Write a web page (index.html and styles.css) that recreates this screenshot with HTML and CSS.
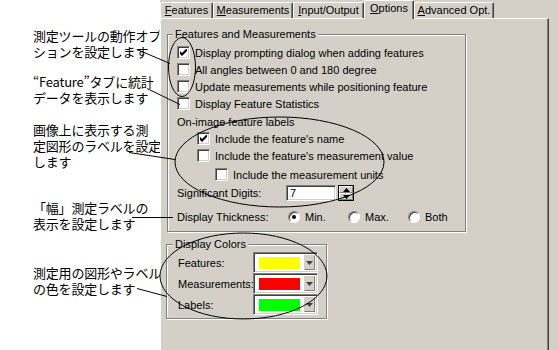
FILE: index.html
```html
<!DOCTYPE html>
<html lang="ja">
<head>
<meta charset="utf-8">
<title>Options</title>
<link rel="stylesheet" href="styles.css">
</head>
<body>
<div class="page">
  <div class="notes">
    <p class="note n1">測定ツールの動作オプ<br>ションを設定します</p>
    <p class="note n2">“Feature”タブに統計<br>データを表示します</p>
    <p class="note n3">画像上に表示する測<br>定図形のラベルを設定<br>します</p>
    <p class="note n4">「幅」測定ラベルの<br>表示を設定します</p>
    <p class="note n5">測定用の図形やラベル<br>の色を設定します</p>
  </div>
  <div class="dialog">
    <div class="tabctl">
      <div class="tabs">
        <span class="tab w-feat"><u>F</u>eatures</span>
        <span class="tab w-meas"><u>M</u>easurements</span>
        <span class="tab w-io"><u>I</u>nput/Output</span>
        <span class="tab w-opt sel"><u>O</u>ptions</span>
        <span class="tab w-adv"><u>A</u>dvanced Opt.</span>
      </div>
      <div class="tabbody">
        <fieldset class="grp g1">
          <legend>Features and Measurements</legend>
          <div class="row"><span class="cb on"><svg viewBox="0 0 7 7" width="7" height="7"><path d="M0 2v3l2 2 5-5V-1L2 4z" fill="#000"/></svg></span>Display prompting dialog when adding features</div>
          <div class="row"><span class="cb"></span>All angles between 0 and 180 degree</div>
          <div class="row"><span class="cb"></span>Update measurements while positioning feature</div>
          <div class="row"><span class="cb"></span>Display Feature Statistics</div>
          <div class="row sub">On-image feature labels</div>
          <div class="row ind1 r-name"><span class="cb on"><svg viewBox="0 0 7 7" width="7" height="7"><path d="M0 2v3l2 2 5-5V-1L2 4z" fill="#000"/></svg></span>Include the feature's name</div>
          <div class="row ind1"><span class="cb"></span>Include the feature's measurement value</div>
          <div class="row ind2"><span class="cb"></span>Include the measurement units</div>
          <div class="row digits">
            <span class="lbl lbl-dig">Significant Digits:</span>
            <span class="edit">7</span>
            <span class="spin">
              <span class="spbtn"><svg viewBox="0 0 7 4" width="7" height="4"><path d="M3.5 0L7 4H0z" fill="#000"/></svg></span>
              <span class="spbtn"><svg viewBox="0 0 7 4" width="7" height="4"><path d="M0 0h7L3.5 4z" fill="#000"/></svg></span>
            </span>
          </div>
          <div class="row thick">
            <span class="lbl lbl-th">Display Thickness:</span>
            <span class="rad-opt"><span class="rb on"></span>Min.</span>
            <span class="rad-opt"><span class="rb"></span>Max.</span>
            <span class="rad-opt"><span class="rb"></span>Both</span>
          </div>
        </fieldset>
        <fieldset class="grp g2">
          <legend>Display Colors</legend>
          <div class="crow"><span class="clbl">Features:</span><span class="combo"><span class="sw sw-y"></span><span class="drop"><svg viewBox="0 0 7 4" width="7" height="4"><path d="M0 0h7L3.5 4z" fill="#404040"/></svg></span></span></div>
          <div class="crow"><span class="clbl">Measurements:</span><span class="combo"><span class="sw sw-r"></span><span class="drop"><svg viewBox="0 0 7 4" width="7" height="4"><path d="M0 0h7L3.5 4z" fill="#404040"/></svg></span></span></div>
          <div class="crow"><span class="clbl">Labels:</span><span class="combo"><span class="sw sw-g"></span><span class="drop"><svg viewBox="0 0 7 4" width="7" height="4"><path d="M0 0h7L3.5 4z" fill="#404040"/></svg></span></span></div>
        </fieldset>
      </div>
    </div>
  </div>
  <svg class="overlay" width="558" height="350" viewBox="0 0 558 350">
    <g fill="none" stroke="#000" stroke-width="1">
      <line x1="137" y1="49.5" x2="170" y2="63.5"/>
      <line x1="147" y1="88.5" x2="180" y2="104.5"/>
      <line x1="129" y1="152.5" x2="175" y2="159.5"/>
      <line x1="132" y1="217.5" x2="173" y2="217.5"/>
      <line x1="137" y1="288.5" x2="167" y2="296.5"/>
      <ellipse cx="182" cy="67" rx="13.5" ry="29.5"/>
      <ellipse cx="279.5" cy="162" rx="104.5" ry="45"/>
      <ellipse cx="243.5" cy="276" rx="83.5" ry="43"/>
    </g>
  </svg>
</div>
</body>
</html>
```

FILE: styles.css
```css
* { box-sizing: border-box; }
html, body { margin: 0; padding: 0; background: #fff; }

.page {
  position: relative;
  width: 558px;
  height: 350px;
  display: flex;
  overflow: hidden;
  background: #fff;
}

/* ---------- annotations ---------- */
.notes {
  width: 160px;
  flex: none;
  padding: 28px 0 0 33px;
  font-family: "Noto Sans CJK JP", "Noto Sans", sans-serif;
  font-size: 13px;
  line-height: 16px;
  color: #000;
  letter-spacing: -0.2px;
}
.note { margin: 0; white-space: nowrap; }
.n2 { margin-top: 14px; }
.n3 { margin-top: 16px; }
.n4 { margin-top: 30px; }
.n5 { margin-top: 33px; }

/* ---------- dialog ---------- */
.dialog {
  flex: 1;
  background: #d4d0c8;
  font-family: "Liberation Sans", Arial, sans-serif;
  font-size: 11px;
  color: #000;
}
.tabctl { width: 389px; height: 350px; display: flex; flex-direction: column; }

.tabs {
  height: 18px;
  display: flex;
  align-items: flex-end;
  position: relative;
  z-index: 1;
}
.tab {
  height: 16px;
  line-height: 14px;
  text-align: center;
  border-top: 1px solid #fff;
  border-left: 1px solid #fff;
  border-right: 1px solid #404040;
  box-shadow: inset -1px 0 #808080;
  border-radius: 2px 2px 0 0;
  white-space: nowrap;
  background: #d4d0c8;
}
.tab u { text-decoration: underline; text-underline-offset: 1px; }
.w-feat { width: 53px; }
.w-meas { width: 80px; }
.w-io   { width: 71px; }
.w-opt  { width: 50px; }
.w-adv  { width: 80px; }
.tab.sel {
  height: 19px;
  margin-bottom: -1px;
  line-height: 14px;
  padding-bottom: 4px;
}

.tabbody {
  flex: 1;
  border-top: 1px solid #fff;
  border-left: 1px solid #fff;
  border-right: 1px solid #404040;
  box-shadow: inset -1px 0 #808080;
  padding: 0;
}

/* ---------- group boxes ---------- */
.grp {
  margin: 0;
  padding: 0;
  border: 1px solid #808080;
  box-shadow: inset 1px 1px #fff, 1px 1px #fff;
  min-width: 0;
}
.grp legend {
  padding: 0 2px;
  line-height: 13px;
  height: 13px;
  background: #d4d0c8;
}
.g1 {
  width: 299px;
  margin: 9px 0 0 6px;
  padding: 3px 0 5px 9px;
}
.g1 legend { margin-left: -4px; }

.row {
  height: 17px;
  display: flex;
  align-items: center;
  white-space: nowrap;
}
.cb {
  width: 13px;
  height: 13px;
  flex: none;
  margin-right: 5px;
  background: #fff;
  border: 1px solid;
  border-color: #808080 #fff #fff #808080;
  box-shadow: inset 1px 1px #404040, inset -1px -1px #d4d0c8;
  display: flex;
  align-items: center;
  justify-content: center;
}
.cb svg { display: block; }

.sub { margin-top: 1px; }
.ind1 { padding-left: 20px; }
.r-name { height: 17px; }
.ind2 { padding-left: 38px; margin-top: 2px; }

.digits { height: 18px; margin-top: 1px; }
.lbl-dig { width: 109px; flex: none; }
.edit {
  width: 50px;
  height: 16px;
  background: #fff;
  border: 1px solid;
  border-color: #808080 #fff #fff #808080;
  box-shadow: inset 1px 1px #404040, inset -1px -1px #d4d0c8;
  padding-left: 3px;
  line-height: 14px;
}
.spin {
  margin-left: 2px;
  width: 16px;
  height: 16px;
  display: flex;
  flex-direction: column;
  border: 1px solid #000;
}
.spbtn {
  flex: 1;
  display: flex;
  align-items: center;
  justify-content: center;
  background: #d4d0c8;
  border: 1px solid;
  border-color: #fff #808080 #808080 #fff;
}
.spbtn svg { display: block; }

.thick { height: 18px; margin-top: 6px; }
.lbl-th { width: 111px; flex: none; }
.rad-opt { width: 60px; display: flex; align-items: center; flex: none; }
.rb {
  width: 12px;
  height: 12px;
  border-radius: 50%;
  margin-right: 5px;
  background: #fff;
  border: 1px solid;
  border-color: #808080 #fff #fff #808080;
  box-shadow: inset 1px 1px #404040;
  position: relative;
  flex: none;
}
.rb.on::after {
  content: "";
  position: absolute;
  left: 3px;
  top: 3px;
  width: 4px;
  height: 4px;
  border-radius: 50%;
  background: #000;
}

.g2 {
  width: 161px;
  margin: 6px 0 0 5px;
  padding: 1px 0 3px 11px;
}
.g2 legend { margin-left: -5px; }
.crow { display: flex; align-items: center; height: 21px; }
.clbl { width: 75px; flex: none; white-space: nowrap; }
.combo {
  width: 65px;
  height: 21px;
  flex: none;
  background: #fff;
  border: 1px solid;
  border-color: #808080 #fff #fff #808080;
  box-shadow: inset 1px 1px #404040, inset -1px -1px #d4d0c8;
  display: flex;
  align-items: center;
  padding: 2px;
}
.sw { width: 41px; height: 12px; margin-left: 3px; flex: none; }
.sw-y { background: #ffff00; }
.sw-r { background: #ff0000; }
.sw-g { background: #00ff00; }
.drop {
  margin-left: 4px;
  width: 14px;
  height: 15px;
  background: #d4d0c8;
  border: 1px solid;
  border-color: #d4d0c8 #808080 #808080 #d4d0c8;
  display: flex;
  align-items: center;
  justify-content: center;
}
.drop svg { display: block; }

/* ---------- callouts ---------- */
.overlay {
  position: absolute;
  left: 0;
  top: 0;
  pointer-events: none;
}
```
